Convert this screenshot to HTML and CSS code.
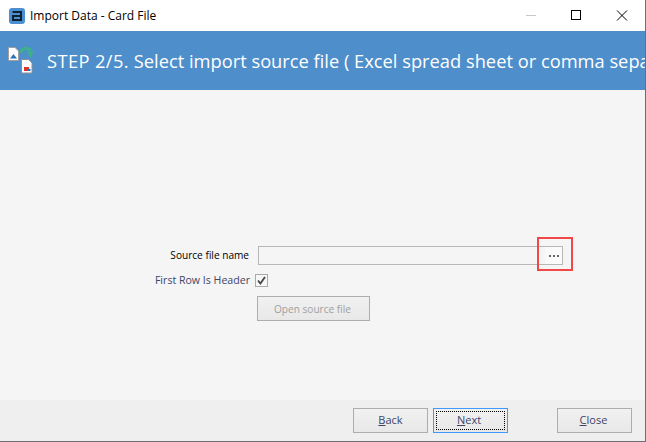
FILE: index.html
```html
<!DOCTYPE html>
<html>
<head>
<meta charset="utf-8">
<title>Import Data - Card File</title>
<link rel="stylesheet" href="styles.css">
</head>
<body>
<div class="window">
  <div class="titlebar">
    <svg class="app-icon" width="16" height="16" viewBox="0 0 16 16">
      <rect x="0" y="0" width="16" height="16" rx="3" fill="#4a8fd0"/>
      <path d="M3.5 4 H12 V12 H4 V8 H12" fill="none" stroke="#10202e" stroke-width="2"/>
    </svg>
    <span class="title">Import Data - Card File</span>
    <div class="controls">
      <svg class="ctl" width="46" height="31" viewBox="0 0 46 31"><path d="M19 15.5 h10" stroke="#c8c8c8" stroke-width="1"/></svg>
      <svg class="ctl" width="46" height="31" viewBox="0 0 46 31"><rect x="18.5" y="10.5" width="9" height="9" fill="none" stroke="#000" stroke-width="1"/></svg>
      <svg class="ctl" width="46" height="31" viewBox="0 0 46 31"><path d="M18 10.5 l10 10 M28 10.5 l-10 10" stroke="#000" stroke-width="1"/></svg>
    </div>
  </div>
  <div class="banner">
    <svg class="banner-icon" width="28" height="32" viewBox="0 0 28 32">
      <path d="M1.5 3.5 h6.5 l3.5 3.5 v9.5 h-10 z" fill="#fff" stroke="#a0a0a0"/>
      <path d="M3 14.5 l3.5 -4.5 l3.5 4.5 z" fill="#2f6fb5"/>
      <path d="M13.5 9 A6 6 0 0 1 24 6.5" fill="none" stroke="#3fb08c" stroke-width="3.2"/>
      <path d="M19 7.5 h8 l-3.5 6.5 z" fill="#3fb08c"/>
      <path d="M14.5 15.5 h7 l3.5 3.5 v10 h-10.5 z" fill="#fff" stroke="#909090"/>
      <rect x="17" y="23" width="5" height="4" fill="#d8382a"/>
      <rect x="21" y="25" width="2.5" height="2" fill="#2f6fb5"/>
    </svg>
    <div class="banner-text"><span class="step">STEP 2/5.</span> Select import source file ( Excel spread sheet or comma sepa</div>
  </div>
  <div class="content">
    <div class="row row-source">
      <label class="lbl lbl-dark">Source file name</label>
      <div class="file-input">
        <div class="file-field"></div>
        <div class="browse"><i></i><i></i><i></i></div>
        <div class="highlight"></div>
      </div>
    </div>
    <div class="row row-check">
      <label class="lbl lbl-soft">First Row Is Header</label>
      <svg class="check" width="13" height="13" viewBox="0 0 13 13">
        <rect x="0.5" y="0.5" width="12" height="12" fill="#f7f7f7" stroke="#aaa"/>
        <path d="M3 6.5 l2.4 3 l4.6 -6.5" fill="none" stroke="#444" stroke-width="1.8"/>
      </svg>
    </div>
    <div class="row row-open">
      <div class="btn btn-open">Open source file</div>
    </div>
  </div>
  <div class="footer">
    <div class="btn btn-foot"><span><u>B</u>ack</span></div>
    <div class="btn btn-foot btn-focus"><span class="focus-ring"><u>N</u>ext</span></div>
    <div class="btn btn-foot btn-close"><span><u>C</u>lose</span></div>
  </div>
</div>
</body>
</html>
```
FILE: styles.css
```css
* { box-sizing: border-box; }
html, body { margin: 0; padding: 0; }
body { width: 646px; height: 442px; overflow: hidden; font-family: "Open Sans", "Noto Sans", sans-serif; }
.window {
  width: 646px; height: 442px; display: flex; flex-direction: column;
  border-right: 1px solid #6e6e6e; border-bottom: 1px solid #6e6e6e;
  background: #f5f5f5;
}
.titlebar { height: 31px; background: #fff; display: flex; align-items: center; padding-left: 9px; flex: none; }
.app-icon { flex: none; }
.title { margin-left: 5px; font-size: 12px; color: #000; white-space: nowrap; }
.controls { margin-left: auto; display: flex; }
.ctl { display: block; }
.banner { height: 59px; flex: none; background: #4d8ecb; display: flex; align-items: center; padding-left: 7px; overflow: hidden; }
.banner-icon { flex: none; margin-top: -1px; }
.banner-text { margin-left: 12px; font-size: 18.3px; color: #fff; white-space: nowrap; }
.step { letter-spacing: 0.4px; }
.content { flex: 1; display: flex; flex-direction: column; padding-top: 156px; }
.row { display: flex; align-items: center; }
.lbl { white-space: nowrap; text-align: right; }
.lbl-dark { color: #000; width: 250px; font-size: 10.1px; padding: 0 1px 2px 0; }
.lbl-soft { color: #3d4468; width: 250px; font-size: 10.6px; }
.row-source { height: 19px; }
.file-input { position: relative; margin-left: 8px; width: 305px; height: 19px; display: flex; border: 1px solid #b8b8b8; }
.file-field { flex: 1; }
.browse { width: 17px; background: #fafafa; display: flex; align-items: center; justify-content: center; gap: 2px; }
.browse i { width: 2px; height: 2px; background: #666; display: block; }
.highlight { position: absolute; left: 278px; top: -10px; width: 36px; height: 34px; border: 2px solid #f04848; }
.row-check { margin-top: 9px; height: 12px; }
.check { margin-left: 5px; flex: none; }
.row-open { margin-top: 10px; padding-left: 257px; }
.btn { display: flex; align-items: center; justify-content: center; border: 1px solid #adadad; background: linear-gradient(#f1f1f1, #e8e8e8); }
.btn-open { width: 113px; height: 25px; font-size: 10.1px; color: #a0a0a0; padding-right: 2px; }
.footer { height: 41px; flex: none; background: #efefef; display: flex; align-items: flex-start; padding: 8px 0 0 353px; gap: 5px; }
.btn-foot { width: 75px; height: 25px; font-size: 11px; color: #3d4468; padding-bottom: 2px; }
.btn-focus { border-color: #3d9bff; padding: 2px; }
.focus-ring { flex: 1; height: 100%; border: 1px dotted #000; display: flex; align-items: center; justify-content: center; padding: 0 3px 2px 0; }
.btn-close { margin-left: 44px; padding-right: 2px; }
```
